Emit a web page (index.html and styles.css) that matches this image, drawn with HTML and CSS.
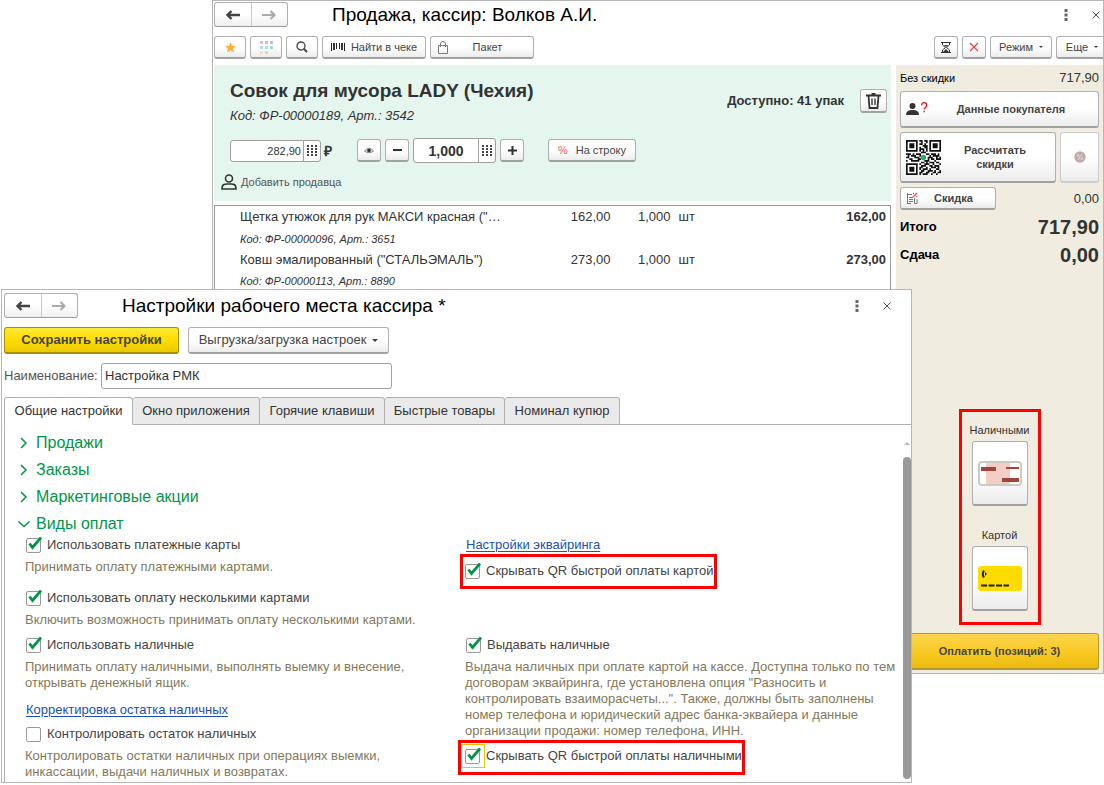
FILE: index.html
```html
<!DOCTYPE html>
<html lang="ru">
<head>
<meta charset="utf-8">
<title>Настройки рабочего места кассира</title>
<link rel="stylesheet" href="styles.css">
</head>
<body>
<div class="desktop">
<section class="window window-sale">
  <header class="titlebar">
    <div class="nav">
      <button type="button" aria-label="Назад"><svg width="14" height="10" viewBox="0 0 14 10"><path d="M2 5H14M5.500 1L1.500 5L5.500 9" fill="none" stroke="#444" stroke-width="2.400"/></svg></button>
      <button type="button" aria-label="Вперед"><svg width="14" height="10" viewBox="0 0 14 10"><path d="M0 5H12M8.500 1L12.500 5L8.500 9" fill="none" stroke="#aaa" stroke-width="2.200"/></svg></button>
    </div>
    <h1>Продажа, кассир: Волков А.И.</h1>
    <div class="win-tools">
      <button type="button" class="bare" aria-label="Меню"><svg width="4" height="12"><path d="M.5 0h3v3h-3zM.5 4.500h3v3h-3zM.5 9h3v3h-3z" fill="#666"/></svg></button>
      <button type="button" class="bare" aria-label="Закрыть"><svg width="8" height="8"><path d="M.5 .5l7 7M7.500 .5l-7 7" stroke="#555"/></svg></button>
    </div>
  </header>
  <div class="toolbar">
    <button type="button" class="btn w32" aria-label="Избранное"><svg width="11" height="11" viewBox="0 0 11 11"><path d="M5.500 0L7 3.700L11 4L8 6.600L9 10.500L5.500 8.500L2 10.500L3 6.600L0 4L4 3.700Z" fill="#fbb040"/></svg></button>
    <button type="button" class="btn w32" aria-label="Плитка"><svg width="13" height="13"><path d="M0 0h3v3H0z" fill="#f2b5cb"/><path d="M5 0h3v3H5z" fill="#d8b3dc"/><path d="M10 0h3v3h-3z" fill="#c6b6e2"/><path d="M0 5h3v3H0z" fill="#a8dcf5"/><path d="M5 5h3v3H5z" fill="#a9dcf7"/><path d="M10 5h3v3h-3z" fill="#9fdcd0"/><path d="M0 10h3v3H0z" fill="#fddda5"/><path d="M5 10h3v3H5z" fill="#fbcdb0"/></svg></button>
    <button type="button" class="btn w32" aria-label="Поиск"><svg width="12" height="12"><circle cx="5" cy="5" r="4" fill="none" stroke="#444" stroke-width="1.300"/><path d="M7.500 7.500L11 11" stroke="#444" stroke-width="2"/></svg></button>
    <button type="button" class="btn w104 find"><svg width="14" height="8"><path d="M.5 0v8M5.500 0v6M8.500 0v6M13.500 0v8" stroke="#222"/><path d="M3 0v7M11 0v7" stroke="#333" stroke-width="2"/></svg><span>Найти в чеке</span></button>
    <button type="button" class="btn w104 bag"><svg width="10" height="13"><path d="M.5 4.500h9v8h-9zM2.500 6V3a2.500 2.500 0 0 1 5 0v3" fill="none" stroke="#777"/></svg><span>Пакет</span></button>
    <span class="grow"></span>
    <button type="button" class="btn w24" aria-label="Отложить"><svg width="10" height="11"><path d="M0 .5h10M0 10.500h10M1.500 1v2l3 2.500l-3 2.500v2M8.500 1v2l-3 2.500l3 2.500v2" fill="none" stroke="#333"/><path d="M3 3h4l-2 2zM5 7l3 3H2z" fill="#333"/></svg></button>
    <button type="button" class="btn w24" aria-label="Отменить"><svg width="10" height="10"><path d="M1 1l8 8M9 1l-8 8" stroke="#f33f45" stroke-width="1.200"/></svg></button>
    <button type="button" class="btn w62"><span>Режим</span><i class="caret"></i></button>
    <button type="button" class="btn w52"><span>Еще</span><i class="caret"></i></button>
  </div>
  <div class="sale-body">
    <main class="sale-main">
      <section class="product">
        <div class="product-head">
          <div>
            <h2>Совок для мусора LADY (Чехия)</h2>
            <p class="code">Код: ФР-00000189, Арт.: 3542</p>
          </div>
          <strong class="stock">Доступно: 41 упак</strong>
          <button type="button" class="btn trash" aria-label="Удалить"><svg width="15" height="16"><path d="M0 2.500h15M5.500 1h4M2.500 3l1 12h8l1-12" fill="none" stroke="#333" stroke-width="1.800"/><path d="M6 5.500v6.500M9 5.500v6.500" stroke="#333" stroke-width="1.400"/></svg></button>
        </div>
        <div class="controls">
          <div class="field price"><input type="text" value="282,90" aria-label="Цена"><button type="button" aria-label="Ввести цену"><svg width="10" height="11"><path d="M1 0v11M5 0v11M9 0v11" stroke="#444" stroke-width="2" stroke-dasharray="2 1"/></svg></button></div>
          <span class="rub">₽</span>
          <button type="button" class="btn w24 eye" aria-label="Просмотр"><svg width="10" height="7"><path d="M.5 4Q5-1.500 9.500 4Q5 7.500 .5 4Z" fill="#ddd" stroke="#888"/><circle cx="5" cy="3.500" r="1.800" fill="#333"/></svg></button>
          <button type="button" class="btn w24" aria-label="Меньше"><svg width="9" height="2"><path d="M0 0h9v2H0z" fill="#333"/></svg></button>
          <div class="field qty"><input type="text" value="1,000" aria-label="Количество"><button type="button" aria-label="Ввести количество"><svg width="10" height="11"><path d="M1 0v11M5 0v11M9 0v11" stroke="#444" stroke-width="2" stroke-dasharray="2 1"/></svg></button></div>
          <button type="button" class="btn w24" aria-label="Больше"><svg width="9" height="9"><path d="M0 4.500h9M4.500 0v9" stroke="#333" stroke-width="2"/></svg></button>
          <button type="button" class="btn line-discount"><span class="pct">%</span><span>На строку</span></button>
        </div>
        <button type="button" class="bare seller"><svg width="16" height="16"><circle cx="8" cy="4.500" r="3.500" fill="none" stroke="#333" stroke-width="1.600"/><path d="M1 15c0-6 4-5 7-5s7-1 7 5z" fill="none" stroke="#333" stroke-width="1.600"/></svg><span>Добавить продавца</span></button>
      </section>
      <section class="lines">
        <table>
          <tr><td class="c-name">Щетка утюжок для рук МАКСИ красная ("…</td><td class="c-price">162,00</td><td class="c-qty">1,000</td><td class="c-unit">шт</td><td class="c-sum">162,00</td></tr>
          <tr><td class="c-code" colspan="5">Код: ФР-00000096, Арт.: 3651</td></tr>
          <tr><td class="c-name">Ковш эмалированный ("СТАЛЬЭМАЛЬ")</td><td class="c-price">273,00</td><td class="c-qty">1,000</td><td class="c-unit">шт</td><td class="c-sum">273,00</td></tr>
          <tr><td class="c-code" colspan="5">Код: ФР-00000113, Арт.: 8890</td></tr>
        </table>
      </section>
    </main>
    <aside class="side">
      <div class="total-row"><span class="t11">Без скидки</span><span class="t13">717,90</span></div>
      <button type="button" class="btn big customer"><svg width="22" height="16"><circle cx="6.500" cy="5" r="3" fill="#333"/><path d="M0 14c0-4 3-5 6.500-5s6.500 1 6.500 5z" fill="#333"/><path d="M15.700 4.500q0-2.800 2.500-2.800t2.500 2.500c0 2-2.500 2-2.500 4.300M18.200 9.800v1.500" fill="none" stroke="#e8141c" stroke-width="1.300"/></svg><span>Данные покупателя</span></button>
      <div class="calc-row">
        <button type="button" class="btn big calc">
          <svg width="35" height="35" viewBox="0 0 21 21"><path fill="#fff" d="M0 0h21v21H0z"/><path fill="none" stroke="#111" d="M.5 .5h6v6h-6zM14.500 .5h6v6h-6zM.5 14.500h6v6h-6z"/><path fill="#111" d="M2 2h3v3H2zM16 2h3v3h-3zM2 16h3v3H2z"/><path fill="none" stroke="#111" d="M8 .5h2M11 .5h2M9 1.500h1M12 1.500h1M8 2.500h2M11 2.500h1M10 3.500h3M8 4.500h1M11 4.500h2M8 5.500h3M12 5.500h1M8 6.500h1M10 6.500h1M12 6.500h1M9 7.500h3M0 8.500h3M4 8.500h1M6 8.500h3M12 8.500h2M15 8.500h3M19 8.500h1M1 9.500h1M3 9.500h3M8 9.500h1M14 9.500h1M16 9.500h4M0 10.500h2M5 10.500h3M13 10.500h3M18 10.500h1M20 10.500h1M2 11.500h2M7 11.500h2M13 11.500h1M15 11.500h2M18 11.500h3M0 12.500h1M3 12.500h5M11 12.500h3M17 12.500h1M9 13.500h2M12 13.500h1M14 13.500h3M18 13.500h2M8 14.500h1M11 14.500h3M16 14.500h1M20 14.500h1M9 15.500h3M14 15.500h2M17 15.500h3M8 16.500h2M12 16.500h1M15 16.500h3M19 16.500h1M8 17.500h1M10 17.500h3M14 17.500h1M18 17.500h2M9 18.500h2M13 18.500h3M17 18.500h1M20 18.500h1M8 19.500h2M12 19.500h2M16 19.500h2M19 19.500h2M8 20.500h1M10 20.500h3M15 20.500h1M18 20.500h1"/><circle cx="10.500" cy="10.500" r="1.600" fill="#2cab66"/></svg>
          <span>Рассчитать<br>скидки</span></button>
        <button type="button" class="btn big percent" aria-label="Процент"><svg width="12" height="12"><circle cx="6" cy="6" r="5.700" fill="#c0a9a9"/><path d="M8 3L4 9" stroke="#ddd"/><circle cx="4" cy="4.500" r="1" fill="none" stroke="#ddd"/><circle cx="8" cy="7.500" r="1" fill="none" stroke="#ddd"/></svg></button>
      </div>
      <div class="total-row disc-row">
        <button type="button" class="btn disc"><svg width="12" height="12"><path d="M1 2.500h5M1.500 1v10M1 11.500h4M3 5.500h4M3 7.500h4M3 9.500h4M8.500 6v5.500H11V7" fill="none" stroke="#777"/><path d="M7 5l4-4M7.500 1v1M10.500 4v1" stroke="#f0484c" stroke-width="1.300"/></svg><span>Скидка</span></button>
        <span class="t13">0,00</span></div>
      <div class="total-row sum"><b>Итого</b><strong>717,90</strong></div>
      <div class="total-row sum"><b>Сдача</b><strong>0,00</strong></div>
      <div class="pay-kinds">
        <label for="cash">Наличными</label>
        <button type="button" id="cash" class="btn pay-kind"><svg width="44" height="25"><rect x="1" y="1" width="42" height="23" rx="3" fill="#fff" stroke="#cfcabe" stroke-width="2"/><path d="M8 2h24v21H8z" fill="#f4cdc5"/><path d="M3 6h15v4H3zM28 6h13v2H28zM24 17h17v4H24z" fill="#a0443c"/></svg></button>
        <label for="card">Картой</label>
        <button type="button" id="card" class="btn pay-kind"><svg width="44" height="25"><rect width="44" height="25" rx="3" fill="#ffdc00"/><path d="M6 4.500q-2.500 3.500 0 7" fill="none" stroke="#222" stroke-width="2"/><path d="M7 6l2 2-2 2z" fill="#222"/><path d="M3 19.500h28" stroke="#222" stroke-width="2" stroke-dasharray="6 1.500"/></svg></button>
      </div>
      <button type="button" class="btn pay">Оплатить (позиций: 3)</button>
    </aside>
  </div>
</section>

<section class="window window-settings">
  <header class="titlebar">
    <div class="nav">
      <button type="button" aria-label="Назад"><svg width="14" height="10" viewBox="0 0 14 10"><path d="M2 5H14M5.500 1L1.500 5L5.500 9" fill="none" stroke="#444" stroke-width="2.400"/></svg></button>
      <button type="button" aria-label="Вперед"><svg width="14" height="10" viewBox="0 0 14 10"><path d="M0 5H12M8.500 1L12.500 5L8.500 9" fill="none" stroke="#aaa" stroke-width="2.200"/></svg></button>
    </div>
    <h1>Настройки рабочего места кассира *</h1>
    <div class="win-tools">
      <button type="button" class="bare" aria-label="Меню"><svg width="4" height="12"><path d="M.5 0h3v3h-3zM.5 4.500h3v3h-3zM.5 9h3v3h-3z" fill="#666"/></svg></button>
      <button type="button" class="bare" aria-label="Закрыть"><svg width="8" height="8"><path d="M.5 .5l7 7M7.500 .5l-7 7" stroke="#555"/></svg></button>
    </div>
  </header>
  <div class="commands">
    <button type="button" class="btn save">Сохранить настройки</button>
    <button type="button" class="btn export"><span>Выгрузка/загрузка настроек</span><i class="caret"></i></button>
  </div>
  <div class="name-row"><label for="name">Наименование:</label><input id="name" type="text" value="Настройка РМК"></div>
  <div class="tabs" role="tablist">
    <button type="button" role="tab" class="tab active" aria-selected="true">Общие настройки</button>
    <button type="button" role="tab" class="tab t127">Окно приложения</button>
    <button type="button" role="tab" class="tab t125">Горячие клавиши</button>
    <button type="button" role="tab" class="tab t120">Быстрые товары</button>
    <button type="button" role="tab" class="tab t115">Номинал купюр</button>
  </div>
  <div class="panel">
    <div class="content">
      <button type="button" class="group"><svg width="12" height="12"><path d="M3 1l5 5-5 5" fill="none" stroke="#009646" stroke-width="1.500"/></svg>Продажи</button>
      <button type="button" class="group"><svg width="12" height="12"><path d="M3 1l5 5-5 5" fill="none" stroke="#009646" stroke-width="1.500"/></svg>Заказы</button>
      <button type="button" class="group"><svg width="12" height="12"><path d="M3 1l5 5-5 5" fill="none" stroke="#009646" stroke-width="1.500"/></svg>Маркетинговые акции</button>
      <button type="button" class="group"><svg width="12" height="12"><path d="M.5 3.500l5.500 5 5.500-5" fill="none" stroke="#009646" stroke-width="1.500"/></svg>Виды оплат</button>
      <div class="options">
        <div class="cell cards">
          <label class="check"><input type="checkbox" checked>Использовать платежные карты</label>
          <p class="hint">Принимать оплату платежными картами.</p>
          <label class="check second"><input type="checkbox" checked>Использовать оплату несколькими картами</label>
          <p class="hint">Включить возможность принимать оплату несколькими картами.</p>
        </div>
        <div class="cell">
          <a href="#acquiring">Настройки эквайринга</a>
          <div class="mark mark-card"><label class="check"><input type="checkbox" checked>Скрывать QR быстрой оплаты картой</label></div>
        </div>
        <div class="cell">
          <label class="check"><input type="checkbox" checked>Использовать наличные</label>
          <p class="hint">Принимать оплату наличными, выполнять выемку и внесение,<br>открывать денежный ящик.</p>
          <a class="fix" href="#correction">Корректировка остатка наличных</a>
          <label class="check"><input type="checkbox">Контролировать остаток наличных</label>
          <p class="hint">Контролировать остатки наличных при операциях выемки,<br>инкассации, выдачи наличных и возвратах.</p>
        </div>
        <div class="cell">
          <label class="check"><input type="checkbox" checked>Выдавать наличные</label>
          <p class="hint">Выдача наличных при оплате картой на кассе. Доступна только по тем<br>договорам эквайринга, где установлена опция "Разносить и<br>контролировать взаиморасчеты...". Также, должны быть заполнены<br>номер телефона и юридический адрес банка-эквайера и данные<br>организации продажи: номер телефона, ИНН.</p>
          <div class="mark mark-cash"><label class="check"><input class="focused" type="checkbox" checked>Скрывать QR быстрой оплаты наличными</label></div>
        </div>
      </div>
    </div>
    <div class="scroll"><i class="up"></i><i class="thumb"></i></div>
  </div>
</section>
</div>
</body>
</html>
```

FILE: styles.css
```css
* { box-sizing: border-box; }
body { margin: 0; background: #fff; color: #333; font: 13px/16px "Liberation Sans", Arial, sans-serif; }
button, input { font: inherit; color: inherit; margin: 0; padding: 0; }
h1, h2, p { margin: 0; }
svg { display: block; flex: none; }
a { color: #1a50b8; text-decoration: underline; text-underline-offset: 2px; }

.desktop { position: relative; height: 100vh; min-height: 785px; overflow: hidden; }
.window { position: absolute; display: flex; flex-direction: column; overflow: hidden; background: #fff; border: 1px solid #b7b7b7; }
.window-sale { left: 212px; right: 0; top: 0; bottom: 111px; }
.window-settings { left: 1px; right: 192px; top: 289px; bottom: 2px; }

.titlebar { display: flex; align-items: center; padding: 0 4px 0 1px; height: 27px; flex: none; }
.window-settings .titlebar { padding: 3px 20px 0 2px; height: 28px; }
.nav { display: flex; width: 74px; height: 25px; border: 1px solid #b0b0b0; border-bottom-color: #999; border-radius: 3px; background: linear-gradient(#fff 50%, #efefef); }
.nav button { flex: 1; display: flex; align-items: center; justify-content: center; border: 0; background: none; }
.nav button + button { border-left: 1px solid #ccc; }
.titlebar h1 { flex: 1; margin-left: 44px; font-size: 19px; line-height: 24px; font-weight: 400; color: #000; }
.win-tools { display: flex; align-items: center; gap: 24px; }
.window-sale .win-tools { margin-right: -1px; }
.bare { display: flex; align-items: center; border: 0; background: none; }

.btn { display: flex; align-items: center; justify-content: center; flex: none; height: 23px; border: 1px solid #b0b0b0; border-bottom: 2px solid #a2a2a2; border-radius: 3px; background: linear-gradient(#fff 50%, #ececec); color: #444; white-space: nowrap; }
.caret { width: 0; height: 0; margin-left: 6px; border: 3px solid transparent; border-top-color: #444; border-bottom: 0; }
.w24 { width: 24px; }
.w32 { width: 32px; }
.w52 { width: 52px; margin-right: -5px; }
.w62 { width: 62px; }
.w104 { width: 104px; }

.toolbar { display: flex; gap: 4px; padding: 8px 0 6px 1px; font-size: 11px; flex: none; }
.toolbar .grow { flex: 1; }
.toolbar .caret { border-width: 2px; border-bottom: 0; }
.find { gap: 6px; }
.bag { justify-content: flex-start; padding-left: 7px; }
.bag span { flex: 1; text-align: center; padding-right: 6px; }

.sale-body { flex: 1; display: grid; grid-template-columns: 1fr 207px; gap: 5px; padding-left: 1px; }
.sale-main { display: flex; flex-direction: column; gap: 4px; }
.product { background: #e5f6ef; padding: 13px 4px 11px 16px; }
.product-head { display: flex; align-items: center; }
.product-head > div { flex: 1; }
.product h2 { font-size: 19px; line-height: 26px; }
.code { font-size: 13px; line-height: 24px; font-style: italic; }
.stock { margin: -4px 16px 0 0; }
.trash { width: 27px; height: 24px; margin-top: -4px; }
.controls { display: flex; align-items: center; margin-top: 10px; }
.controls .btn + .btn { margin-left: 4px; }
.field { display: flex; background: #fff; border: 1px solid #a0a0a0; border-radius: 3px; }
.field input { flex: 1; min-width: 0; border: 0; background: none; text-align: right; }
.field button { display: flex; align-items: center; justify-content: center; width: 17px; border: 0; border-left: 1px solid #a0a0a0; background: none; }
.price { width: 91px; height: 22px; font-size: 11px; }
.price input { padding-right: 2px; }
.qty { width: 83px; height: 25px; margin: 0 4px; font-size: 14px; font-weight: 700; }
.qty input { text-align: center; }
.rub { width: 33px; padding-left: 3px; font-size: 14px; font-weight: 700; }
.eye { margin-left: 3px; }
.controls .btn.line-discount { width: 88px; margin-left: 24px; gap: 8px; font-size: 11px; }
.pct { color: #f0585c; }
.seller { gap: 4px; margin: 11px 0 0 -9px; font-size: 11px; color: #555; }

.lines { flex: 1; border: 1px solid #999; border-bottom: 0; padding-left: 25px; }
.lines table { width: 100%; border-collapse: collapse; }
.lines td { height: 21px; padding: 0; }
.lines tr:first-child td { height: 22px; }
.c-name { width: 42%; }
.c-price { width: 15%; text-align: right; }
.c-qty { width: 60px; text-align: right; }
.c-unit { padding-left: 8px !important; }
.c-sum { text-align: right; font-weight: 700; padding-right: 4px !important; }
.c-code { font-size: 11px; font-style: italic; }

.side { display: flex; flex-direction: column; background: #f1ece0; padding: 0 4px 3px; }
.total-row { display: flex; align-items: center; justify-content: space-between; height: 26px; }
.t11 { font-size: 11px; color: #000; }
.t13 { font-size: 13px; }
.big { height: 37px; font-size: 11px; font-weight: 700; }
.big span { flex: 1; text-align: center; }
.customer { padding: 0 4px 0 5px; }
.calc-row { display: flex; gap: 4px; margin: 4px 0; }
.calc { flex: 1; height: 51px; padding-left: 5px; line-height: 14px; }
.calc span { padding-right: 6px; }
.percent { width: 39px; height: 51px; border-color: #ccc; }
.disc-row { height: 23px; }
.disc { width: 96px; padding-left: 5px; font-size: 11px; font-weight: 700; }
.disc span { flex: 1; text-align: center; padding-right: 6px; }
.sum { height: 28px; margin-top: 3px; }
.sum + .sum { margin-top: 0; }
.sum b { font-size: 13px; color: #000; }
.sum strong { font-size: 20px; }
.pay-kinds { display: flex; flex-direction: column; align-items: center; align-self: center; width: 82px; margin-top: auto; border: 3px solid red; padding: 9px 0 11px; font-size: 11px; }
.pay-kinds label { line-height: 18px; padding-bottom: 2px; }
.pay-kind { width: 56px; height: 65px; }
.pay-kind + label { margin-top: 20px; }
.pay { height: 37px; margin-top: 8px; border-color: #b99a2c; background: linear-gradient(#fbd44f, #f8c81e 60%, #e8b90f); font-size: 11px; font-weight: 700; }

.commands { display: flex; gap: 9px; padding: 9px 2px 0; }
.commands .btn { height: 27px; }
.save { width: 175px; border-color: #a89000; background: linear-gradient(#ffe838, #ffdc00 50%, #e9ca00); font-weight: 700; font-size: 13px; }
.export { width: 201px; }
.name-row { display: flex; align-items: center; gap: 4px; padding: 9px 2px 0; }
.name-row label { width: 93px; color: #555; }
.name-row input { width: 291px; height: 26px; border: 1px solid #a0a0a0; border-radius: 3px; padding: 0 3px 2px; }
.tabs { display: flex; margin: 8px 0 0 2px; }
.tabs::after { content: ""; flex: 1; border-bottom: 1px solid #b0b0b0; }
.tab { height: 28px; border: 1px solid #b0b0b0; border-left: 0; background: #eaeaea; border-radius: 3px 3px 0 0; white-space: nowrap; }
.tab.active { width: 129px; background: #fff; border-left: 1px solid #b0b0b0; border-bottom-color: #fff; }
.t127 { width: 127px; }
.t125 { width: 125px; }
.t120 { width: 120px; }
.t115 { width: 115px; }
.panel { flex: 1; display: flex; min-height: 0; margin-left: 2px; border-left: 1px solid #b0b0b0; }
.content { flex: 1; padding: 4px 0 0 20px; }
.group { display: flex; align-items: center; gap: 6px; height: 27px; margin-left: -7px; border: 0; background: none; font-size: 16px; color: #009646; }
.options { display: grid; grid-template-columns: 1fr 1fr; column-gap: 2px; margin-top: -2px; color: #444; }
.cell { display: flex; flex-direction: column; align-items: flex-start; min-width: 0; }
.cards { padding-bottom: 3px; }
.check { display: flex; align-items: center; gap: 5px; height: 20px; padding-left: 1px; white-space: nowrap; }
.check input { appearance: none; width: 16px; height: 16px; background: url("data:image/svg+xml,%3Csvg xmlns='http://www.w3.org/2000/svg' width='16' height='16'%3E%3Crect x='.5' y='1.5' width='14' height='14' rx='1.5' fill='white' stroke='%23999'/%3E%3C/svg%3E"); }
.check input:checked { background: url("data:image/svg+xml,%3Csvg xmlns='http://www.w3.org/2000/svg' width='16' height='16'%3E%3Crect x='.5' y='1.5' width='14' height='14' rx='1.5' fill='white' stroke='%23999'/%3E%3Cpath d='M3.500 6.500L6.500 10.500L15 0.500' fill='none' stroke='%23009646' stroke-width='2.800'/%3E%3C/svg%3E"); }
.check input.focused { outline: 1px solid #f5c400; outline-offset: 3px; }
.hint { padding: 4px 0; color: #83795c; white-space: nowrap; }
.second { margin-top: 9px; }
.cell > a { padding: 2px 1px 1px; }
.cell > .fix { margin: 5px 0; }
.mark { border: 3px solid red; }
.mark-card { margin-left: -5px; padding: 4px 0 5px 1px; }
.mark-cash { margin: -3px 0 0 -7px; padding: 3px 0 6px 3px; }
.scroll { display: flex; flex-direction: column; align-items: center; width: 8px; padding: 17px 0 3px; }
.up { border: 3px solid transparent; border-bottom-color: #bbb; border-top: 0; }
.thumb { flex: 1; width: 8px; margin-top: 12px; border-radius: 4px; background: #999; }
```
